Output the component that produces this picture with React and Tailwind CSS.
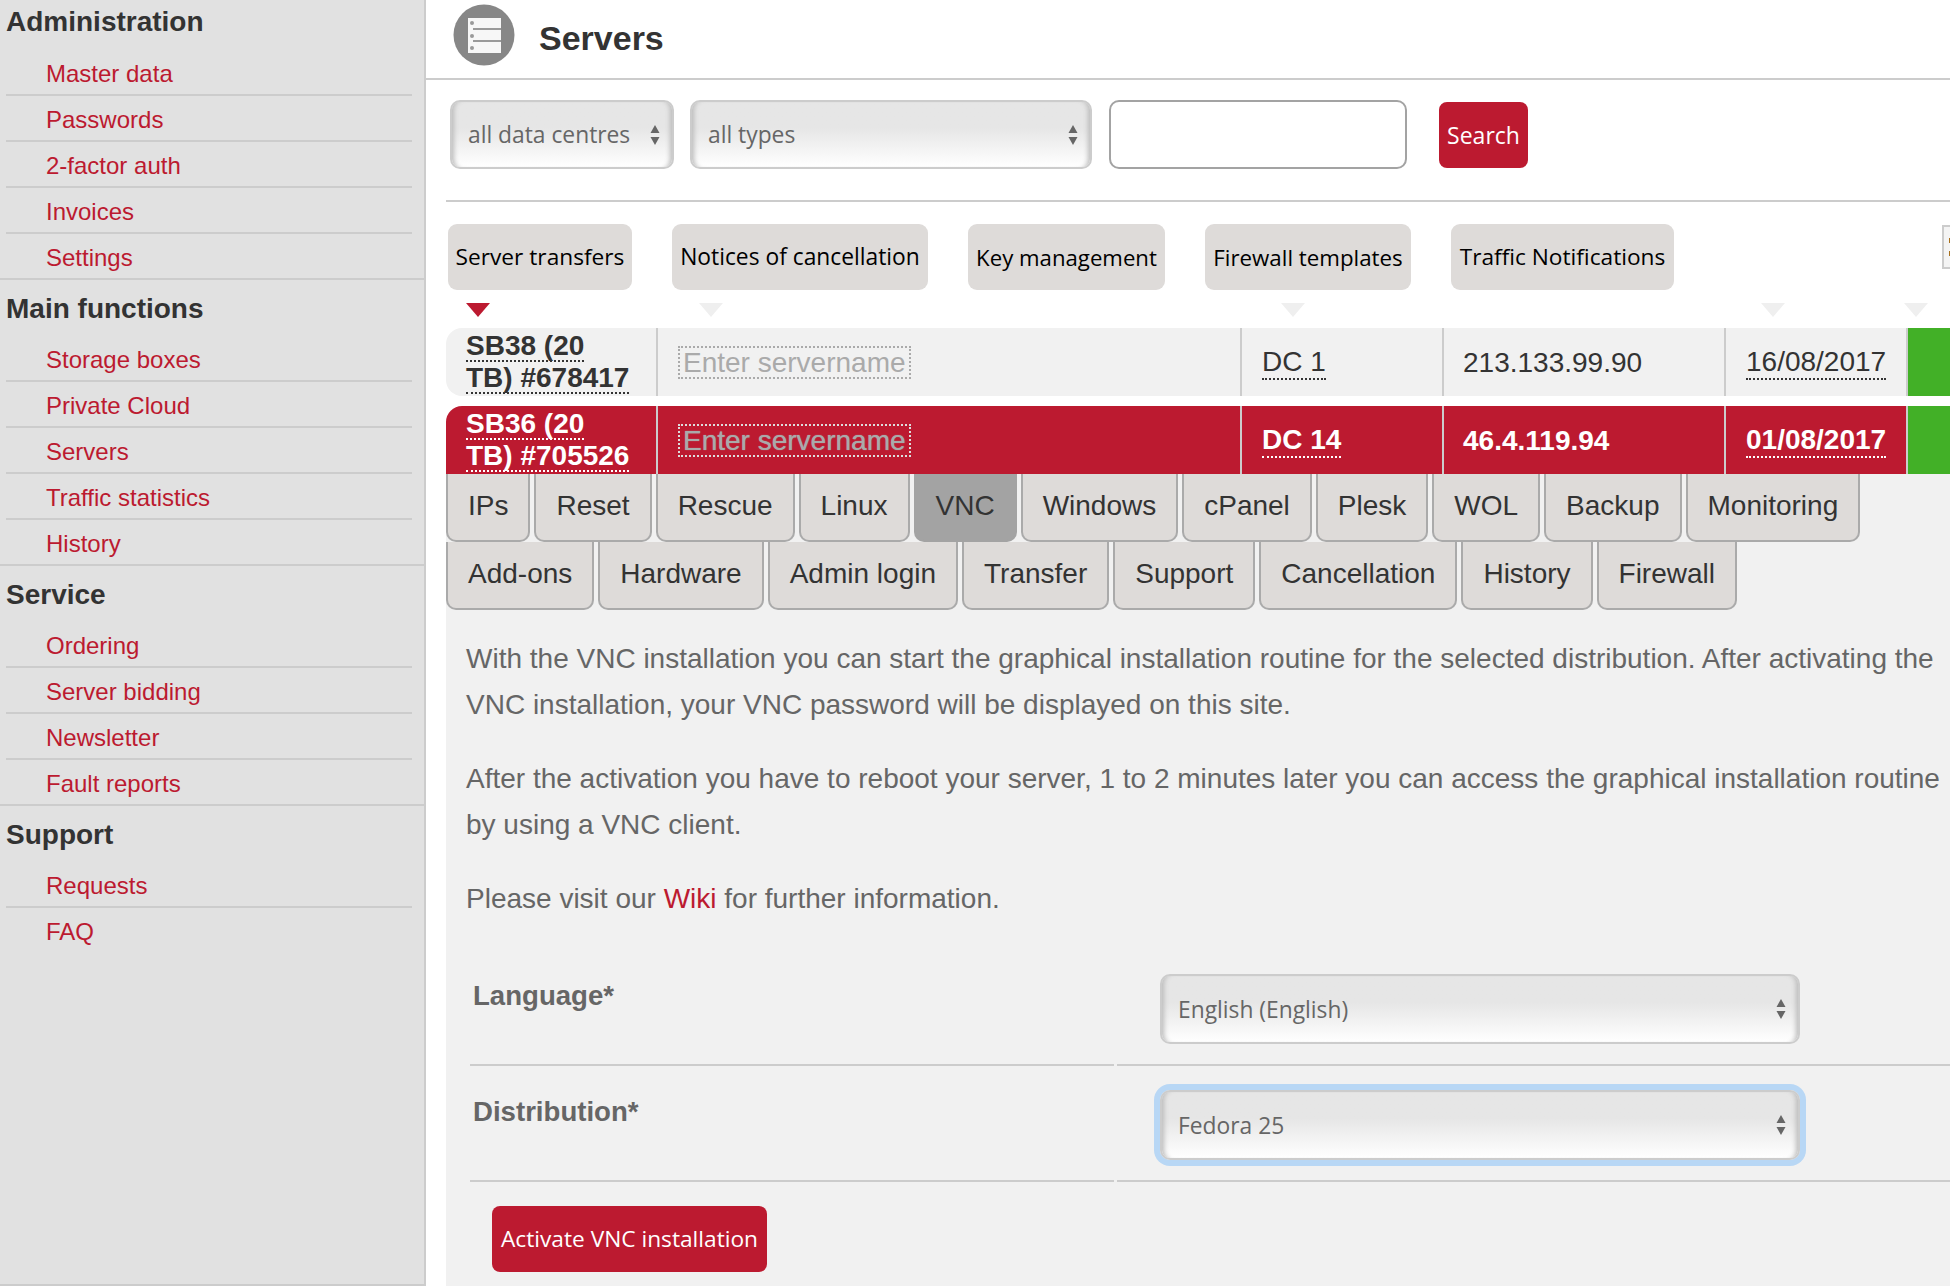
import React from "react";

const RED = "text-[#bc1a30]";
const groups = [
  { title: "Administration", h: "h-[50px] pb-[6px]", items: ["Master data", "Passwords", "2-factor auth", "Invoices", "Settings"] },
  { title: "Main functions", h: "h-[56px] pt-[1px]", items: ["Storage boxes", "Private Cloud", "Servers", "Traffic statistics", "History"] },
  { title: "Service", h: "h-[56px] pt-[1px]", items: ["Ordering", "Server bidding", "Newsletter", "Fault reports"] },
  { title: "Support", h: "h-[56px] pt-[1px]", items: ["Requests", "FAQ"], last: true },
];

function Sidebar() {
  return (
    <aside className="w-[426px] h-[1286px] shrink-0 bg-[#e1e1e1] border-r-2 border-b-2 border-[#cccccc]">
      {groups.map((g) => (
        <section key={g.title} className={g.last ? "" : "border-b-2 border-[#cccccc]"}>
          <h2 className={`${g.h} flex items-center pl-[6px] text-[28px] font-bold text-[#333333]`}>{g.title}</h2>
          <ul className="ml-[6px] w-[406px]">
            {g.items.map((it, i) => {
              const divider = i < g.items.length - 1;
              return (
                <li
                  key={it}
                  className={`${divider ? "h-[46px] border-b-2 border-[#cccccc]" : g.last ? "h-[46px] pb-[2px]" : "h-[44px]"} pl-[40px] pt-[3px] flex items-center text-[24px] ${RED}`}
                >
                  {it}
                </li>
              );
            })}
          </ul>
        </section>
      ))}
    </aside>
  );
}

function ServerIcon() {
  return (
    <svg width="62" height="62" viewBox="0 0 62 62" className="shrink-0 mb-[5px]">
      <circle cx="31" cy="31" r="30.5" fill="#878787" />
      <rect x="15" y="14" width="33" height="35" fill="#f7f7f7" />
      <rect x="20" y="24" width="28" height="2" fill="#9a9a9a" />
      <rect x="20" y="36" width="28" height="2" fill="#9a9a9a" />
      <circle cx="19" cy="19" r="2" fill="#9a9a9a" />
      <circle cx="19" cy="32" r="2" fill="#9a9a9a" />
      <circle cx="19" cy="44" r="2" fill="#9a9a9a" />
    </svg>
  );
}

function Arrows({ className = "" }) {
  return (
    <svg width="10" height="22" viewBox="0 0 10 22" className={`absolute top-1/2 -translate-y-1/2 pointer-events-none ${className}`}>
      <path d="M5 1 L9.5 9 H0.5 Z M5 21 L9.5 13 H0.5 Z" fill="#666666" />
    </svg>
  );
}

function Select({ value, className, arrow = "right-[14px]", pad = "pl-[16px]", font = "text-[22.8px]" }) {
  return (
    <div className={`relative ${className}`}>
      <select
        defaultValue={value}
        className={`appearance-none w-full h-full ${pad} pt-[2px] ${font} text-[#666666] rounded-[10px] border-2 border-[#cccccc] bg-gradient-to-b from-[#e6e6e6] from-40% to-white outline-none shadow-[inset_6px_0_5px_-4px_#bbbbbb,inset_-6px_0_5px_-4px_#bbbbbb]`}
        style={{ fontFamily: '"Open Sans", sans-serif' }}
      >
        <option>{value}</option>
      </select>
      <Arrows className={arrow} />
    </div>
  );
}

const Tri = ({ color = "border-t-[#efefef]", className = "" }) => (
  <div className={`w-0 h-0 border-x-[12.5px] border-x-transparent border-t-[14px] ${color} ${className}`} />
);

const GRID = "grid grid-cols-[210px_584px_202px_282px_182px_44px] w-[1504px]";

function Row({ a, b, dc, ip, date, selected, rounded }) {
  const text = selected ? "text-white font-bold" : "text-[#333333]";
  const bg = selected ? "bg-[#bc1a30]" : "bg-[#f1f1f1]";
  const dot = selected ? "border-white" : "border-[#333333]";
  const cell = `border-l-2 border-[#cccccc] h-[68px] flex items-center ${bg}`;
  return (
    <div className={`${GRID} text-[28px] ${text}`}>
      <div className={`${bg} ${rounded} h-[68px] pl-[20px] font-bold leading-[32px] pt-[2px]`}>
        <span className={`border-b-2 border-dotted ${dot} block w-fit h-[32px]`}>{a}</span>
        <span className={`border-b-2 border-dotted ${dot} block w-fit h-[32px]`}>{b}</span>
      </div>
      <div className={`${cell} pl-[20px]`}>
        <span className={`border-2 border-dotted ${selected ? "border-[#dddddd] [text-shadow:0_0_1px_#aaaaaa]" : "border-[#aaaaaa]"} h-[33px] px-[3px] leading-[29px] text-[#aaaaaa] font-normal`}>
          Enter servername
        </span>
      </div>
      <div className={`${cell} pl-[20px] pt-[2px]`}>
        <span className={`border-b-2 border-dotted ${dot} leading-[32px]`}>{dc}</span>
      </div>
      <div className={`${cell} pl-[19px] pt-[2px]`}>{ip}</div>
      <div className={`${cell} pl-[20px] pt-[2px]`}>
        <span className={`border-b-2 border-dotted ${dot} leading-[32px]`}>{date}</span>
      </div>
      <div className="border-l-2 border-[#cccccc] h-[68px] bg-[#42b027]" />
    </div>
  );
}

function Tab({ children, active }) {
  return (
    <div
      className={`h-[68px] flex items-center px-[20px] pb-[2px] rounded-b-[10px] text-[28px] text-[#333333] border-x-2 border-b-2 ${
        active ? "bg-[#a3a3a3] border-[#a3a3a3]" : "bg-[#dedbd9] border-[#aaaaaa]"
      }`}
    >
      {children}
    </div>
  );
}

const PILL = "h-[66px] rounded-[9px] bg-[#dedbd9] flex items-center justify-center pt-[1px] text-black whitespace-nowrap";
const OPEN = { fontFamily: '"Open Sans", sans-serif' };

export default function App() {
  return (
    <div className="flex w-[1950px] h-[1286px] overflow-hidden bg-white" style={{ fontFamily: '"Liberation Sans", Arial, sans-serif' }}>
      <Sidebar />
      <main className="flex-1 min-w-0">
        <header className="h-[80px] border-b-2 border-[#cccccc] flex items-center pl-[27px] pb-[4px] gap-[24px]">
          <ServerIcon />
          <h1 className="text-[34px] font-bold text-[#333333] mt-[2px]">Servers</h1>
        </header>

        <div className="ml-[20px]">
          <div className="h-[122px] border-b-2 border-[#cccccc] flex items-start pt-[20px] pl-[4px]" style={OPEN}>
            <Select value="all data centres" className="w-[224px] h-[69px]" />
            <Select value="all types" className="w-[402px] h-[69px] ml-[16px]" />
            <input className="ml-[17px] w-[298px] h-[69px] rounded-[10px] border-2 border-[#a3a3a3] bg-white outline-none" />
            <button className="ml-[32px] mt-[2px] w-[89px] h-[66px] rounded-[8px] bg-[#bc1a30] text-white text-[23px]">Search</button>
          </div>

          <div className="relative flex items-start pt-[22px] pl-[2px] gap-[40px]" style={OPEN}>
            <div className={`${PILL} w-[184px] text-[22.7px]`}>Server transfers</div>
            <div className={`${PILL} w-[256px] text-[22.8px]`}>Notices of cancellation</div>
            <div className={`${PILL} w-[197px] text-[22.2px]`}>Key management</div>
            <div className={`${PILL} w-[206px] text-[22.3px]`}>Firewall templates</div>
            <div className={`${PILL} w-[223px] text-[22.7px]`}>Traffic Notifications</div>
            <div className="absolute left-[1496px] top-[23px] w-[12px] h-[44px] border-2 border-[#cccccc] bg-[#f4f4f4] flex flex-col justify-center items-end gap-[8px]">
              <span className="w-[3px] h-[5px] bg-[#a8701c]" />
              <span className="w-[3px] h-[5px] bg-[#a8701c]" />
            </div>
          </div>

          <div className={`${GRID} h-[38px] pt-[13px]`}>
            <div className="pl-[20px]"><Tri color="border-t-[#bc1a30]" /></div>
            <div className="pl-[43px]"><Tri /></div>
            <div className="pl-[41px]"><Tri /></div>
            <div />
            <div className="pl-[37px]"><Tri /></div>
            <div className="-ml-[2px]"><Tri /></div>
          </div>

          <Row a="SB38 (20" b="TB) #678417" dc="DC 1" ip="213.133.99.90" date="16/08/2017" rounded="rounded-l-[16px]" />
          <div className="h-[10px]" />
          <Row a="SB36 (20" b="TB) #705526" dc="DC 14" ip="46.4.119.94" date="01/08/2017" selected rounded="rounded-tl-[16px]" />

          <div className="bg-[#f1f1f1] h-[812px]">
            <div className="flex gap-[4px]">
              {["IPs", "Reset", "Rescue", "Linux", "VNC", "Windows", "cPanel", "Plesk", "WOL", "Backup", "Monitoring"].map((t) => (
                <Tab key={t} active={t === "VNC"}>{t}</Tab>
              ))}
            </div>
            <div className="flex gap-[4px]">
              {["Add-ons", "Hardware", "Admin login", "Transfer", "Support", "Cancellation", "History", "Firewall"].map((t) => (
                <Tab key={t}>{t}</Tab>
              ))}
            </div>

            <div className="pl-[20px] pr-[8px] pt-[26px] text-[28px] leading-[46px] text-[#666666]">
              <p>With the VNC installation you can start the graphical installation routine for the selected distribution. After activating the VNC installation, your VNC password will be displayed on this site.</p>
              <p className="mt-[28px]">After the activation you have to reboot your server, 1 to 2 minutes later you can access the graphical installation routine by using a VNC client.</p>
              <p className="mt-[28px]">Please visit our <span className={RED}>Wiki</span> for further information.</p>
            </div>

            <div className="ml-[24px] mt-[28px] grid grid-cols-[644px_1fr] gap-x-[3px]">
              <div className="h-[116px] border-b-2 border-[#cccccc] pt-[23px] pl-[3px] text-[27.6px] leading-[46px] font-bold text-[#666666]">Language*</div>
              <div className="h-[116px] border-b-2 border-[#cccccc] pt-[24px] pl-[43px]">
                <Select value="English (English)" className="w-[640px] h-[70px]" />
              </div>
              <div className="h-[116px] border-b-2 border-[#cccccc] pt-[23px] pl-[3px] text-[27.6px] leading-[46px] font-bold text-[#666666]">Distribution*</div>
              <div className="h-[116px] border-b-2 border-[#cccccc] pt-[24px] pl-[43px]">
                <Select value="Fedora 25" className="w-[640px] h-[70px] rounded-[10px] ring-[6px] ring-[#b8d7f5]" />
              </div>
            </div>

            <button className="ml-[46px] mt-[24px] w-[275px] h-[66px] rounded-[8px] bg-[#bc1a30] text-white text-[22.7px]" style={OPEN}>
              Activate VNC installation
            </button>
          </div>
        </div>
      </main>
    </div>
  );
}
